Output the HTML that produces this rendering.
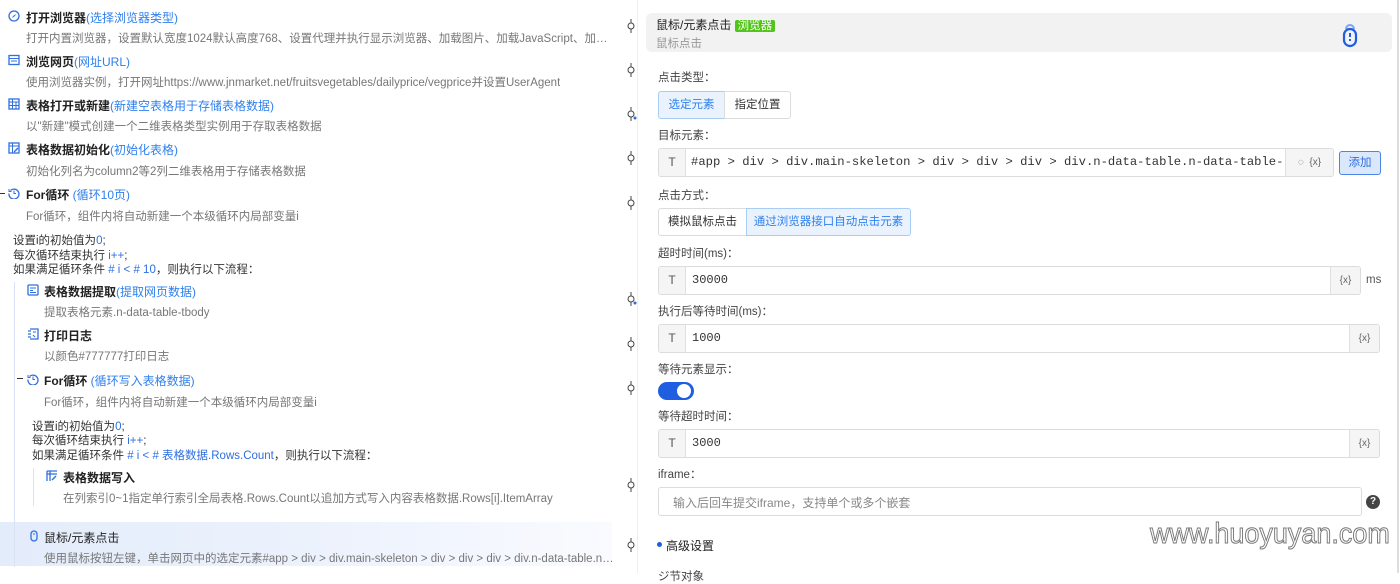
<!DOCTYPE html>
<html><head><meta charset="utf-8"><style>
*{margin:0;padding:0;box-sizing:border-box}
body{width:1400px;height:573px;overflow:hidden;background:#fff;font-family:"Liberation Sans","Noto Sans CJK SC",sans-serif;font-size:12px;color:#333;position:relative}
.a{position:absolute;white-space:nowrap}
.t{font-size:12px;font-weight:bold;color:#222}
.t span{color:#2f80ed;font-weight:normal}
.d{font-size:11.5px;color:#777;overflow:hidden;text-overflow:ellipsis;max-width:590px}
.l{font-size:11.5px;color:#333}
.b{color:#2f6fe0}
.ic{position:absolute;width:12px;height:12px}
.lab{font-size:11.5px;color:#444}
.inp{position:absolute;border:1px solid #dcdcdc;border-radius:3px;height:29px;background:#fff;overflow:hidden}
.inp .T{position:absolute;left:0;top:0;bottom:0;width:27px;background:#f5f5f5;border-right:1px solid #e0e0e0;text-align:center;line-height:27px;font-size:12px;color:#555}
.inp .v{position:absolute;left:33px;top:0;line-height:27px;font-family:"Liberation Mono",monospace;font-size:12px;color:#333}
.inp .x{position:absolute;right:0;top:0;bottom:0;width:30px;background:#f5f5f5;border-left:1px solid #e0e0e0;text-align:center;line-height:27px;font-size:10px;color:#666}
.seg{position:absolute;height:28px;border:1px solid #dcdcdc;line-height:26px;text-align:center;font-size:11.5px;color:#333}
.on{background:#eaf3fd;border-color:#a8cdf5;color:#2f80ed}
</style></head><body>

<div class="a" style="left:637px;top:0;width:1px;height:573px;background:#eee"></div>
<div class="a" style="left:0;top:522px;width:612px;height:44px;background:linear-gradient(90deg,#e3ecfb,#eef3fd 60%,#fafbff)"></div>
<div class="a" style="left:14px;top:282px;width:1px;height:285px;background:#d9e3f5"></div>
<div class="a" style="left:33px;top:468px;width:1px;height:38px;background:#d9e3f5"></div>

<svg class="ic" style="left:8px;top:10px" viewBox="0 0 12 12"><circle cx="6" cy="6" r="5" fill="none" stroke="#2f6fe0" stroke-width="1.3"/><path d="M8 4L5 6 4 8 7 6z" fill="#2f6fe0"/></svg>
<div class="a t" style="left:26px;top:9px">打开浏览器<span>(选择浏览器类型)</span></div>
<div class="a d" style="left:26px;top:30px">打开内置浏览器，设置默认宽度1024默认高度768、设置代理并执行显示浏览器、加载图片、加载JavaScript、加载Css等加载选项的浏览器实例</div>

<svg class="ic" style="left:8px;top:54px" viewBox="0 0 12 12"><rect x="1" y="1.5" width="10" height="9" fill="none" stroke="#2f6fe0" stroke-width="1.3"/><path d="M1 4.5h10M3 7h6" stroke="#2f6fe0"/></svg>
<div class="a t" style="left:26px;top:53px">浏览网页<span>(网址URL)</span></div>
<div class="a d" style="left:26px;top:74px">使用浏览器实例，打开网址https://www.jnmarket.net/fruitsvegetables/dailyprice/vegprice并设置UserAgent</div>

<svg class="ic" style="left:8px;top:98px" viewBox="0 0 12 12"><rect x="1" y="1" width="10" height="10" fill="none" stroke="#2f6fe0" stroke-width="1.3"/><path d="M1 4h10M4.5 1v10M8 4v7M1 7.5h10" stroke="#2f6fe0"/></svg>
<div class="a t" style="left:26px;top:97px">表格打开或新建<span>(新建空表格用于存储表格数据)</span></div>
<div class="a d" style="left:26px;top:118px">以"新建"模式创建一个二维表格类型实例用于存取表格数据</div>

<svg class="ic" style="left:8px;top:142px" viewBox="0 0 12 12"><rect x="1" y="1" width="10" height="10" fill="none" stroke="#2f6fe0" stroke-width="1.3"/><path d="M1 4h10M4.5 1v10" stroke="#2f6fe0"/><path d="M6 10l4-4" stroke="#2f6fe0" stroke-width="1.4"/></svg>
<div class="a t" style="left:26px;top:141px">表格数据初始化<span>(初始化表格)</span></div>
<div class="a d" style="left:26px;top:163px">初始化列名为column2等2列二维表格用于存储表格数据</div>

<div class="a" style="left:0;top:193px;width:5px;height:1px;background:#333"></div>
<svg class="ic" style="left:8px;top:187px" viewBox="0 0 12 12"><path d="M2.5 3.5A5 5 0 1 1 1 6.5" fill="none" stroke="#2f6fe0" stroke-width="1.3"/><path d="M1 2v2.5h2.5" fill="none" stroke="#2f6fe0"/><path d="M6 3.5v3h2" fill="none" stroke="#2f6fe0"/></svg>
<div class="a t" style="left:26px;top:186px">For循环 <span>(循环10页)</span></div>
<div class="a d" style="left:26px;top:208px">For循环，组件内将自动新建一个本级循环内局部变量i</div>
<div class="a l" style="left:13px;top:232px">设置i的初始值为<span class="b">0</span>;</div>
<div class="a l" style="left:13px;top:247px">每次循环结束执行 <span class="b">i++</span>;</div>
<div class="a l" style="left:13px;top:261px">如果满足循环条件 <span class="b"># i &lt; # 10</span>，则执行以下流程：</div>

<svg class="ic" style="left:27px;top:284px" viewBox="0 0 12 12"><rect x="1" y="1" width="10" height="10" rx="1" fill="none" stroke="#2f6fe0" stroke-width="1.3"/><path d="M3 4h6M3 6.5h3M3 8.5h6" stroke="#2f6fe0"/></svg>
<div class="a t" style="left:44px;top:283px">表格数据提取<span>(提取网页数据)</span></div>
<div class="a d" style="left:44px;top:304px">提取表格元素.n-data-table-tbody</div>

<svg class="ic" style="left:27px;top:328px" viewBox="0 0 12 12"><path d="M3 1h8v10H3M1 3h3M1 6h3M1 9h3" fill="none" stroke="#2f6fe0" stroke-width="1.3"/><path d="M6 4h3M6 7l2 2" stroke="#2f6fe0"/></svg>
<div class="a t" style="left:44px;top:327px">打印日志</div>
<div class="a d" style="left:44px;top:348px">以颜色#777777打印日志</div>

<div class="a" style="left:17px;top:378px;width:6px;height:1px;background:#333"></div>
<svg class="ic" style="left:27px;top:373px" viewBox="0 0 12 12"><path d="M2.5 3.5A5 5 0 1 1 1 6.5" fill="none" stroke="#2f6fe0" stroke-width="1.3"/><path d="M1 2v2.5h2.5" fill="none" stroke="#2f6fe0"/><path d="M6 3.5v3h2" fill="none" stroke="#2f6fe0"/></svg>
<div class="a t" style="left:44px;top:372px">For循环 <span>(循环写入表格数据)</span></div>
<div class="a d" style="left:44px;top:394px">For循环，组件内将自动新建一个本级循环内局部变量i</div>
<div class="a l" style="left:32px;top:418px">设置i的初始值为<span class="b">0</span>;</div>
<div class="a l" style="left:32px;top:432px">每次循环结束执行 <span class="b">i++</span>;</div>
<div class="a l" style="left:32px;top:447px">如果满足循环条件 <span class="b"># i &lt; # 表格数据.Rows.Count</span>，则执行以下流程：</div>

<svg class="ic" style="left:46px;top:470px" viewBox="0 0 12 12"><path d="M1 1h10M1 4h10M1 1v10M4 1v10" fill="none" stroke="#2f6fe0" stroke-width="1.3"/><path d="M6 10l4-4" stroke="#2f6fe0" stroke-width="1.4"/></svg>
<div class="a t" style="left:63px;top:469px">表格数据写入</div>
<div class="a d" style="left:63px;top:490px">在列索引0~1指定单行索引全局表格.Rows.Count以追加方式写入内容表格数据.Rows[i].ItemArray</div>

<svg class="ic" style="left:28px;top:530px" viewBox="0 0 12 12"><rect x="3" y="1" width="6" height="10" rx="3" fill="none" stroke="#2f6fe0" stroke-width="1.3"/><path d="M6 3v2" stroke="#2f6fe0"/></svg>
<div class="a t" style="left:44px;top:529px;font-weight:normal;color:#222">鼠标/元素点击</div>
<div class="a d" style="left:44px;top:550px;max-width:572px">使用鼠标按钮左键，单击网页中的选定元素#app &gt; div &gt; div.main-skeleton &gt; div &gt; div &gt; div &gt; div.n-data-table.n-data-table--bordered</div>

<svg class="a" style="left:626px;top:0" width="12" height="573" viewBox="0 0 12 573" fill="none" stroke="#444" stroke-width="1">
<g><path d="M5 19v4M5 29v4"/><circle cx="5" cy="26" r="3"/></g>
<g><path d="M5 63v4M5 73v4"/><circle cx="5" cy="70" r="3"/></g>
<g><path d="M5 107v4M5 117v4"/><circle cx="5" cy="114" r="3"/><circle cx="9" cy="118" r="1.5" fill="#2f6fe0" stroke="none"/></g>
<g><path d="M5 151v4M5 161v4"/><circle cx="5" cy="158" r="3"/></g>
<g><path d="M5 196v4M5 206v4"/><circle cx="5" cy="203" r="3"/></g>
<g><path d="M5 292v4M5 302v4"/><circle cx="5" cy="299" r="3"/><circle cx="9" cy="303" r="1.5" fill="#2f6fe0" stroke="none"/></g>
<g><path d="M5 337v4M5 347v4"/><circle cx="5" cy="344" r="3"/></g>
<g><path d="M5 381v4M5 391v4"/><circle cx="5" cy="388" r="3"/></g>
<g><path d="M5 478v4M5 488v4"/><circle cx="5" cy="485" r="3"/></g>
<g><path d="M5 538v4M5 548v4"/><circle cx="5" cy="545" r="3"/></g>
</svg>

<div class="a" style="left:1397px;top:0;width:2px;height:573px;background:#ddd"></div>
<div class="a" style="left:646px;top:13px;width:746px;height:39px;background:#f2f2f2;border-radius:6px"></div>
<div class="a" style="left:656px;top:16px;font-size:12px;color:#222">鼠标/元素点击 <span style="background:#52c41a;color:#fff;padding:0 3px;border-radius:2px;font-size:11.5px">浏览器</span></div>
<div class="a" style="left:656px;top:35px;font-size:11.5px;color:#999">鼠标点击</div>
<svg class="a" style="left:1342px;top:21px" width="16" height="28" viewBox="0 0 16 28"><path d="M4 8a4 4 0 0 1 8 0" fill="none" stroke="#7aa6f0" stroke-width="2"/><rect x="2" y="8" width="12" height="17" rx="6" fill="none" stroke="#1f5ee0" stroke-width="2.2"/><path d="M8 12v4M8 18v2" stroke="#1f5ee0" stroke-width="2"/></svg>

<div class="a lab" style="left:658px;top:69px">点击类型：</div>
<div class="seg on" style="left:658px;top:91px;width:67px;border-radius:3px 0 0 3px">选定元素</div>
<div class="seg" style="left:724px;top:91px;width:67px;border-radius:0 3px 3px 0">指定位置</div>

<div class="a lab" style="left:658px;top:127px">目标元素：</div>
<div class="inp" style="left:658px;top:148px;width:676px">
<div class="T">T</div><div class="v" style="left:32px;width:596px;overflow:hidden;font-size:12.2px">#app &gt; div &gt; div.main-skeleton &gt; div &gt; div &gt; div &gt; div.n-data-table.n-data-table--bor</div>
<div class="x" style="width:48px">◌ &nbsp;{x}</div></div>
<div class="a" style="left:1339px;top:151px;width:42px;height:24px;border:1px solid #4a86e8;background:#dbe8fb;border-radius:3px;color:#2f6fe0;text-align:center;line-height:22px;font-size:11.5px">添加</div>

<div class="a lab" style="left:658px;top:187px">点击方式：</div>
<div class="seg" style="left:658px;top:208px;width:89px;border-radius:3px 0 0 3px">模拟鼠标点击</div>
<div class="seg on" style="left:746px;top:208px;width:165px;border-radius:0 3px 3px 0">通过浏览器接口自动点击元素</div>

<div class="a lab" style="left:658px;top:245px">超时时间(ms)：</div>
<div class="inp" style="left:658px;top:266px;width:703px"><div class="T">T</div><div class="v">30000</div><div class="x">{x}</div></div>
<div class="a lab" style="left:1366px;top:274px;color:#555">ms</div>

<div class="a lab" style="left:658px;top:303px">执行后等待时间(ms)：</div>
<div class="inp" style="left:658px;top:324px;width:722px"><div class="T">T</div><div class="v">1000</div><div class="x">{x}</div></div>

<div class="a lab" style="left:658px;top:361px">等待元素显示：</div>
<div class="a" style="left:658px;top:382px;width:36px;height:18px;border-radius:9px;background:#1f5ee0"></div>
<div class="a" style="left:677px;top:384px;width:14px;height:14px;border-radius:7px;background:#fff"></div>

<div class="a lab" style="left:658px;top:408px">等待超时时间：</div>
<div class="inp" style="left:658px;top:429px;width:722px"><div class="T">T</div><div class="v">3000</div><div class="x">{x}</div></div>

<div class="a lab" style="left:658px;top:466px">iframe：</div>
<div class="inp" style="left:658px;top:487px;width:704px"><div class="a" style="left:14px;top:6px;font-size:12px;color:#888">输入后回车提交iframe，支持单个或多个嵌套</div></div>
<div class="a" style="left:1366px;top:495px;width:14px;height:14px;border-radius:7px;background:#444;color:#fff;font-size:10px;font-weight:bold;text-align:center;line-height:14px">?</div>

<div class="a" style="left:657px;top:542px;width:5px;height:5px;border-radius:3px;background:#1f5ee0"></div>
<div class="a" style="left:666px;top:537px;font-size:12px;color:#222">高级设置</div>
<div class="a lab" style="left:658px;top:568px">ジ节对象</div>

<div class="a" style="left:1150px;top:518px;font-family:'Liberation Sans',sans-serif;font-size:29px;color:#fff;-webkit-text-stroke:1px #777;transform:scaleX(0.93);transform-origin:left">www.huoyuyan.com</div>
</body></html>
